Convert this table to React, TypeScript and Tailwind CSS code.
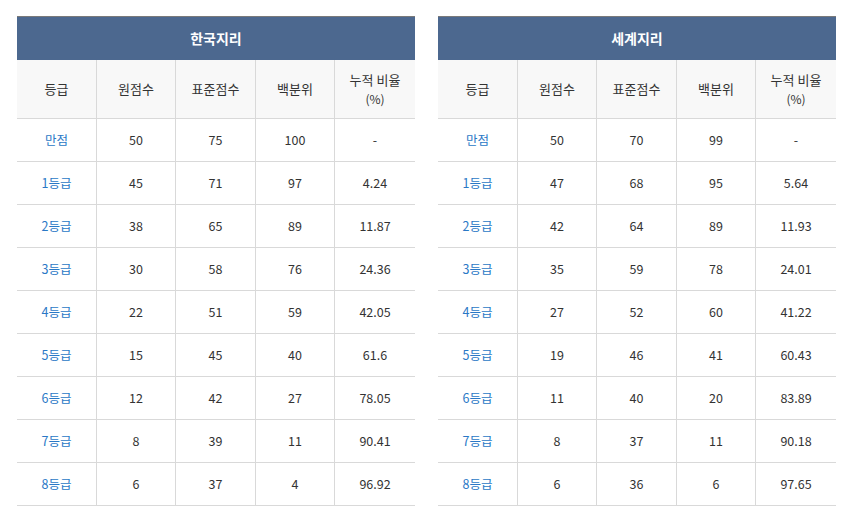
import React from "react";

type Row = [string, string, string, string, string];

const korea: Row[] = [
  ["만점", "50", "75", "100", "-"],
  ["1등급", "45", "71", "97", "4.24"],
  ["2등급", "38", "65", "89", "11.87"],
  ["3등급", "30", "58", "76", "24.36"],
  ["4등급", "22", "51", "59", "42.05"],
  ["5등급", "15", "45", "40", "61.6"],
  ["6등급", "12", "42", "27", "78.05"],
  ["7등급", "8", "39", "11", "90.41"],
  ["8등급", "6", "37", "4", "96.92"],
];

const world: Row[] = [
  ["만점", "50", "70", "99", "-"],
  ["1등급", "47", "68", "95", "5.64"],
  ["2등급", "42", "64", "89", "11.93"],
  ["3등급", "35", "59", "78", "24.01"],
  ["4등급", "27", "52", "60", "41.22"],
  ["5등급", "19", "46", "41", "60.43"],
  ["6등급", "11", "40", "20", "83.89"],
  ["7등급", "8", "37", "11", "90.18"],
  ["8등급", "6", "36", "6", "97.65"],
];

const cols = "grid grid-cols-[79px_79px_80px_79px_81px]";

function ScoreTable({ title, rows }: { title: string; rows: Row[] }) {
  return (
    <div className="w-[398px] border-t border-[#7a7a7a]">
      <div className="h-[43px] bg-[#4c688f] flex items-center justify-center text-white font-bold text-[14px]">
        {title}
      </div>
      <div className={`${cols} h-[59px] bg-[#f8f8f8] border-b border-[#d9d9d9] text-[#333] text-[13px]`}>
        {["등급", "원점수", "표준점수", "백분위"].map((h, i) => (
          <div key={h} className={`flex items-center justify-center ${i > 0 ? "border-l border-[#d9d9d9]" : ""}`}>
            {h}
          </div>
        ))}
        <div className="flex flex-col items-center justify-center border-l border-[#d9d9d9] leading-[19px]">
          <span>누적 비율</span>
          <span className="text-[12px]">(%)</span>
        </div>
      </div>
      {rows.map((r) => (
        <div key={r[0]} className={`${cols} h-[43px] border-b border-[#d9d9d9] text-[12.5px] text-[#333]`}>
          {r.map((c, i) => (
            <div
              key={i}
              className={`flex items-center justify-center ${i > 0 ? "border-l border-[#d9d9d9]" : "text-[#2a78c6]"}`}
            >
              {c}
            </div>
          ))}
        </div>
      ))}
    </div>
  );
}

export default function App() {
  return (
    <div
      className="w-[851px] h-[532px] bg-white pt-[16px] pl-[17px] flex gap-[23px]"
      style={{ fontFamily: '"Noto Sans CJK KR", "Noto Sans", sans-serif' }}
    >
      <ScoreTable title="한국지리" rows={korea} />
      <ScoreTable title="세계지리" rows={world} />
    </div>
  );
}
